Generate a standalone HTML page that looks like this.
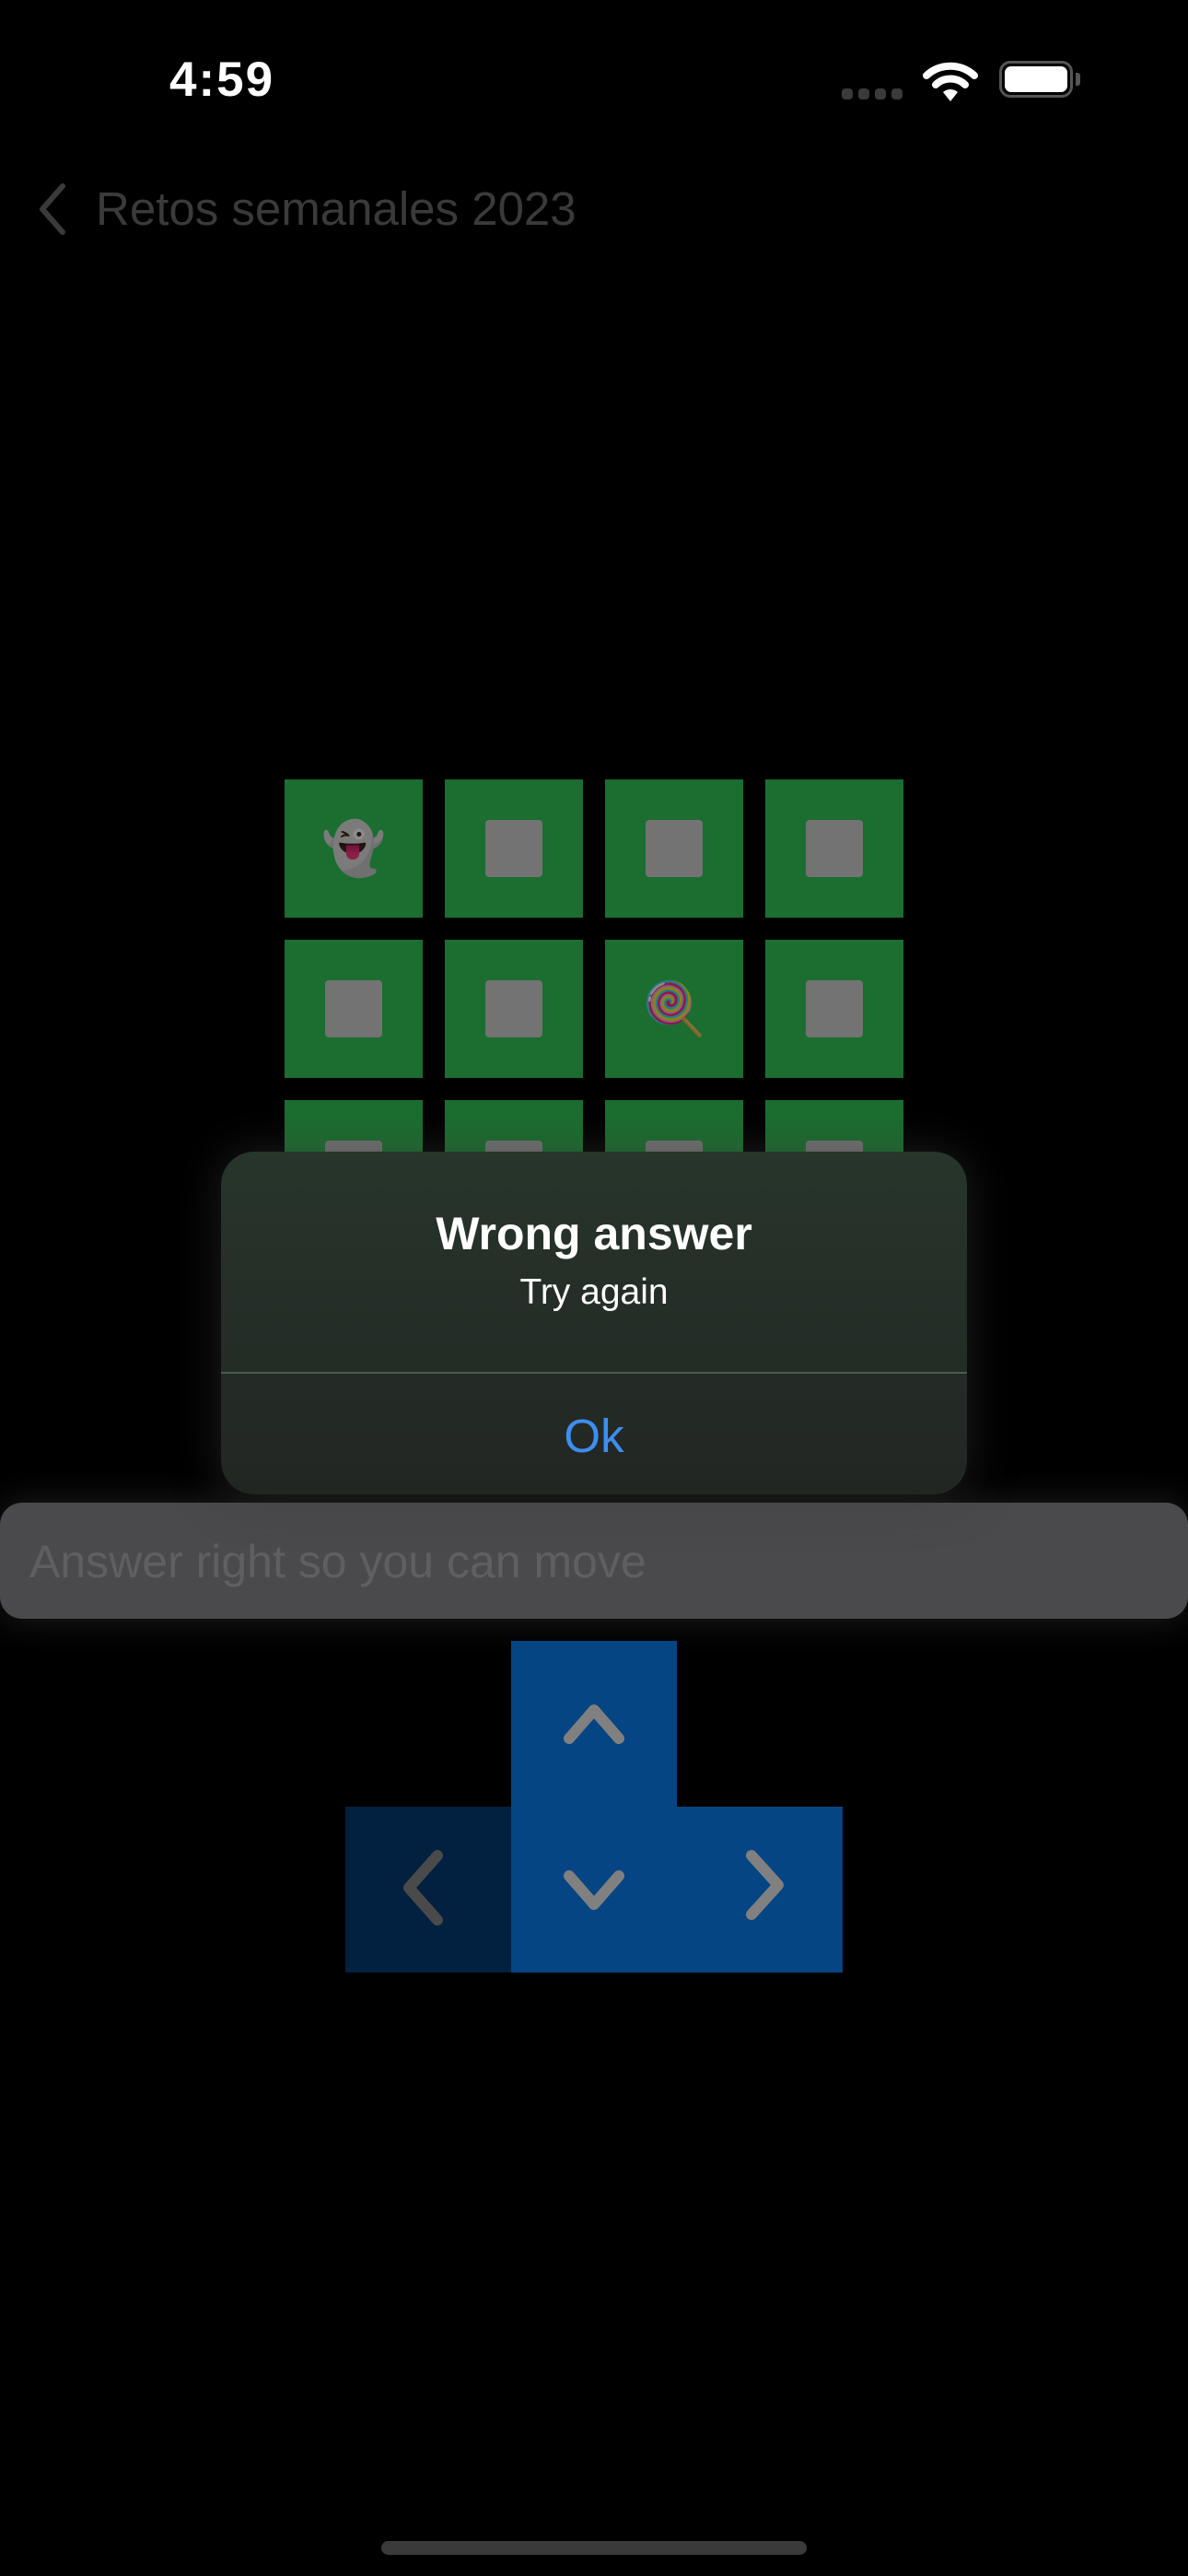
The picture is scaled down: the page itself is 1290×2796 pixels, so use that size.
<!DOCTYPE html>
<html><head><meta charset="utf-8"><style>
*{margin:0;padding:0;box-sizing:border-box}
body{width:1290px;height:2796px;background:#000;position:relative;overflow:hidden;font-family:"Liberation Sans",sans-serif}
.abs{position:absolute}
.tile{position:absolute;width:150px;height:150px;background:#1b6e30}
.sq{position:absolute;left:44px;top:44px;width:62px;height:62px;background:#737373;border-radius:4px}
.emo{position:absolute;left:0;top:0;width:150px;height:150px;display:flex;align-items:center;justify-content:center;font-size:56px;filter:brightness(.55)}
</style></head><body>
<div class="abs" style="left:184px;top:56px;color:#fff;font-size:53px;font-weight:bold;letter-spacing:2px">4:59</div>
<div class="abs" style="left:914px;top:96px;width:70px;height:12px;display:flex;gap:6px">
<div style="width:12px;height:12px;border-radius:4px;background:#3a3a3a"></div><div style="width:12px;height:12px;border-radius:4px;background:#3a3a3a"></div><div style="width:12px;height:12px;border-radius:4px;background:#3a3a3a"></div><div style="width:12px;height:12px;border-radius:4px;background:#3a3a3a"></div></div>
<svg class="abs" style="left:1002px;top:64px" width="60" height="46" viewBox="0 0 60 46"><path d="M4 18 A38 38 0 0 1 56 18" stroke="#fff" stroke-width="8" fill="none" stroke-linecap="round"/><path d="M14 28 A23 23 0 0 1 46 28" stroke="#fff" stroke-width="8" fill="none" stroke-linecap="round"/><path d="M22 36 L30 46 L38 36 A12 12 0 0 0 22 36Z" fill="#fff"/></svg>
<div class="abs" style="left:1085px;top:66px;width:80px;height:40px;border:3px solid #555;border-radius:12px"></div>
<div class="abs" style="left:1091px;top:72px;width:68px;height:28px;background:#fff;border-radius:7px"></div>
<div class="abs" style="left:1168px;top:79px;width:5px;height:14px;background:#555;border-radius:0 3px 3px 0"></div>
<svg class="abs" style="left:36px;top:196px" width="40" height="62" viewBox="0 0 40 62"><path d="M32 6 L10 31 L32 56" stroke="#3a3a3a" stroke-width="6" fill="none" stroke-linecap="round" stroke-linejoin="round"/></svg>
<div class="abs" style="left:104px;top:197px;color:#3a3a3a;font-size:51px">Retos semanales 2023</div>

<div class="tile" style="left:309px;top:846px"><div class="emo">👻</div></div>
<div class="tile" style="left:483px;top:846px"><div class="sq"></div></div>
<div class="tile" style="left:657px;top:846px"><div class="sq"></div></div>
<div class="tile" style="left:831px;top:846px"><div class="sq"></div></div>
<div class="tile" style="left:309px;top:1020px"><div class="sq"></div></div>
<div class="tile" style="left:483px;top:1020px"><div class="sq"></div></div>
<div class="tile" style="left:657px;top:1020px"><div class="emo">🍭</div></div>
<div class="tile" style="left:831px;top:1020px"><div class="sq"></div></div>
<div class="tile" style="left:309px;top:1194px"><div class="sq"></div></div>
<div class="tile" style="left:483px;top:1194px"><div class="sq"></div></div>
<div class="tile" style="left:657px;top:1194px"><div class="sq"></div></div>
<div class="tile" style="left:831px;top:1194px"><div class="sq"></div></div>

<div class="abs" style="left:0;top:1631px;width:1290px;height:126px;background:#4a4a4c;border-radius:24px;box-shadow:0 0 40px rgba(90,90,90,.35)"></div>
<div class="abs" style="left:32px;top:1666px;color:#5f5f61;font-size:50px">Answer right so you can move</div>

<div class="abs" style="left:240px;top:1250px;width:810px;height:372px;border-radius:36px;background:linear-gradient(#27352b,#222623);box-shadow:0 0 50px rgba(60,60,60,.5)">
<div style="position:absolute;top:60px;width:100%;text-align:center;color:#fff;font-size:50px;font-weight:bold">Wrong answer</div>
<div style="position:absolute;top:131px;width:100%;text-align:center;color:#fff;font-size:39px">Try again</div>
<div style="position:absolute;top:239px;width:100%;height:2px;background:#4b5a4f"></div>
<div style="position:absolute;top:279px;width:100%;text-align:center;color:#3d8ef0;font-size:51px">Ok</div>
</div>

<div class="abs" style="left:555px;top:1781px;width:180px;height:360px;background:#054583"></div>
<div class="abs" style="left:735px;top:1961px;width:180px;height:180px;background:#054583"></div>
<div class="abs" style="left:375px;top:1961px;width:180px;height:180px;background:#02203f"></div>
<svg class="abs" style="left:555px;top:1781px" width="360" height="360" viewBox="0 0 360 360">
<path d="M63 106 L90 75 L117 106" stroke="#808080" stroke-width="12" fill="none" stroke-linecap="round" stroke-linejoin="round"/>
<path d="M63 255 L90 286 L117 255" stroke="#808080" stroke-width="12" fill="none" stroke-linecap="round" stroke-linejoin="round"/>
<path d="M261 233 L290 265 L261 297" stroke="#808080" stroke-width="12" fill="none" stroke-linecap="round" stroke-linejoin="round"/>
</svg>
<svg class="abs" style="left:375px;top:1961px" width="180" height="180" viewBox="0 0 180 180">
<path d="M100 53 L69 88 L100 123" stroke="#4a4a4a" stroke-width="12" fill="none" stroke-linecap="round" stroke-linejoin="round"/>
</svg>

<div class="abs" style="left:414px;top:2758px;width:462px;height:15px;border-radius:8px;background:#3a3a3a"></div>
</body></html>
